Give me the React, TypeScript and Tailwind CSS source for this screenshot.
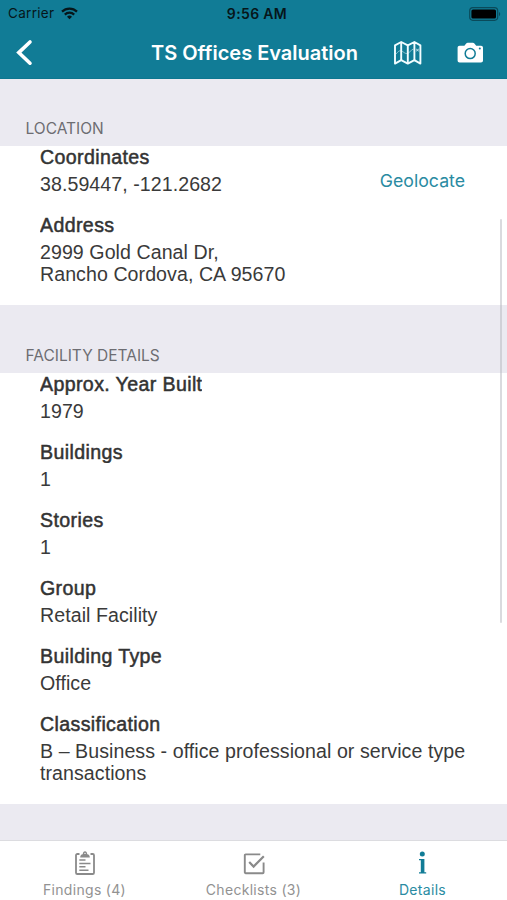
import type { ReactNode } from "react";

type Item = {
  label: string;
  lines: string[];
  action?: string;
};

const location: Item[] = [
  { label: "Coordinates", lines: ["38.59447, -121.2682"], action: "Geolocate" },
  { label: "Address", lines: ["2999 Gold Canal Dr,", "Rancho Cordova, CA 95670"] },
];

const facility: Item[] = [
  { label: "Approx. Year Built", lines: ["1979"] },
  { label: "Buildings", lines: ["1"] },
  { label: "Stories", lines: ["1"] },
  { label: "Group", lines: ["Retail Facility"] },
  { label: "Building Type", lines: ["Office"] },
  {
    label: "Classification",
    lines: ["B – Business - office professional or service type", "transactions"],
  },
];

function WifiIcon() {
  return (
    <svg width="17" height="13" viewBox="0 0 17 13" fill="none" stroke="#06161a" strokeWidth="2.2">
      <path d="M1 4.6a10.8 10.8 0 0 1 15 0" />
      <path d="M3.8 7.6a6.8 6.8 0 0 1 9.4 0" />
      <path d="M8.5 12.2 6 9.7a3.6 3.6 0 0 1 5 0Z" fill="#06161a" stroke="none" />
    </svg>
  );
}

function BatteryIcon() {
  return (
    <svg width="32" height="14" viewBox="0 0 32 14" fill="none">
      <rect x="0.7" y="0.7" width="28" height="12.6" rx="3.2" stroke="#0a4a5a" strokeWidth="1.2" />
      <rect x="2.4" y="2.4" width="24.6" height="9.2" rx="1.6" fill="#000" />
      <path d="M30 5v4.2c1.6-.6 1.6-3.6 0-4.2Z" fill="#0a4a5a" />
    </svg>
  );
}

function BackIcon() {
  return (
    <svg width="18" height="28" viewBox="0 0 18 28" fill="none" stroke="#fff" strokeWidth="3.6" strokeLinecap="round">
      <path d="M15 3 3.8 13.6 15 24.2" />
    </svg>
  );
}

function MapIcon() {
  return (
    <svg width="30" height="26" viewBox="0 0 30 26" fill="none" stroke="#f2fdff" strokeWidth="1.9" strokeLinejoin="round">
      <path d="M2 5.4 8.2 2l6.6 3.400L21.4 2l6 3.4V23.6l-6-3.4-6.6 3.4-6.6-3.4L2 23.6Z" />
      <path d="M8.2 2v18.2M14.8 5.4v18.2M21.4 2v18.2" />
      <path d="M3 14c2-2.4 3.4-3.6 5-3.2 2.6.6 4 3.6 6.8 2.6 2.6-1 3-4 5.6-4.2" strokeWidth="1" opacity=".5" />
      <path d="m23.2 9 2.6 2.2m0-2.2-2.6 2.2" strokeWidth="1" opacity=".8" />
    </svg>
  );
}

function CameraIcon() {
  return (
    <svg width="27" height="22" viewBox="0 0 27 22">
      <path
        d="M2.6 3.8h4.8l1.8-2.2c.4-.5.9-.8 1.5-.8h5.2c.6 0 1.1.3 1.5.8l1.8 2.2h4.8c1.2 0 2 .8 2 2v12.8c0 1.2-.8 2-2 2H2.6c-1.2 0-2-.8-2-2V5.8c0-1.2.8-2 2-2Z"
        fill="#fff"
      />
      <circle cx="13.2" cy="11.6" r="5" fill="none" stroke="#117c96" strokeWidth="1.5" />
      <circle cx="22.8" cy="6.4" r="1" fill="#117c96" />
    </svg>
  );
}

function ClipboardIcon() {
  return (
    <svg width="20" height="25" viewBox="0 0 20 25" fill="none" stroke="#8a8a8a" strokeWidth="1.8">
      <path d="M4.5 3H2.3A1.3 1.3 0 0 0 1 4.3v17.4A1.3 1.3 0 0 0 2.3 23h15.4a1.3 1.3 0 0 0 1.3-1.3V4.3A1.3 1.3 0 0 0 17.7 3H15.5" />
      <path d="M5.2 6.4c0-1.8.9-3 2.5-3.200C8 1.500 8.6.2 10 .2s2 1.300 2.300 3c1.600.2 2.500 1.400 2.500 3.200Z" fill="#8a8a8a" stroke="none" />
      <circle cx="10" cy="2.4" r=".7" fill="#fff" stroke="none" />
      <path d="M4.3 9h6.2M4.3 12.4h11.2M4.3 15.8h6.2M4.3 19.2h9.2" strokeWidth="1.5" />
    </svg>
  );
}

function CheckIcon() {
  return (
    <svg width="22" height="24" viewBox="0 0 22 24" fill="none" stroke="#8a8a8a" strokeWidth="1.9">
      <path d="M17.3 3.4H2.7a.9.9 0 0 0-.9.9v17a.9.9 0 0 0 .9.9h17a.9.9 0 0 0 .9-.9V11.6" />
      <path d="m6.2 11 4.4 4.600L20.8 5.2" strokeWidth="2.2" />
    </svg>
  );
}

function InfoIcon() {
  return (
    <svg width="9" height="24" viewBox="0 0 9 24" fill="#117c96">
      <circle cx="4.3" cy="3" r="2.5" />
      <path d="M1 8h5.4v13.2h1.800v1.2H1v-1.2h1.8V9.2H1Z" />
    </svg>
  );
}

function SectionTitle({ children }: { children: ReactNode }) {
  return (
    <h2 className="flex items-end h-[68px] pl-[25.5px] pb-[7px] text-[15.5px] leading-[20px] text-[#6d6d72]">
      {children}
    </h2>
  );
}

function Section({ items }: { items: Item[] }) {
  return (
    <dl className="bg-white pl-10 pr-[42px] text-[#3a3a3a] text-[19.6px] font-['Liberation_Sans',sans-serif]">
      {items.map((item) => (
        <div key={item.label} className="flex justify-between pb-[19px] last:pb-[19.5px]">
          <div>
            <dt className="h-[22px] leading-[22px] overflow-hidden whitespace-nowrap tracking-[0.37px] text-[#333] [-webkit-text-stroke:0.5px_#333]">
              {item.label}
            </dt>
            <dd className="pt-[4.5px] leading-[22.5px] tracking-[0.06px] whitespace-nowrap">
              {item.lines.map((line) => (
                <div key={line}>{line}</div>
              ))}
            </dd>
          </div>
          {item.action && (
            <button className="self-end h-[29px] leading-[22px] text-[17.7px] text-[#2a8ba2] font-[Inter,sans-serif]">
              {item.action}
            </button>
          )}
        </div>
      ))}
    </dl>
  );
}

function Tab({ icon, label, active }: { icon: ReactNode; label: string; active?: boolean }) {
  return (
    <button
      className={`flex-1 flex flex-col items-center pt-[10px] text-[14px] leading-[18px] tracking-[0.3px] ${
        active ? "text-[#2a8ba2]" : "text-[#929292]"
      }`}
    >
      <span className="h-[30px] flex items-start justify-center">{icon}</span>
      {label}
    </button>
  );
}

export default function App() {
  return (
    <div className="relative flex flex-col w-[507px] h-[900px] overflow-hidden bg-[#ebeaf1] font-[Inter,sans-serif]">
      <header className="h-[79px] shrink-0 bg-[#117c96] border-b border-[#0d7790]">
        <div className="grid grid-cols-3 items-center h-[27px] pl-2 pr-[6px] text-[13.5px] text-[#06161a]">
          <div className="flex items-center gap-[7px] tracking-[0.3px]">
            Carrier
            <WifiIcon />
          </div>
          <div className="text-center text-[14px] font-semibold tracking-[0.35px] pl-[5px]">9:56 AM</div>
          <div className="flex justify-end">
            <BatteryIcon />
          </div>
        </div>
        <div className="flex items-center h-[51px] pl-[15px] pr-[23px]">
          <BackIcon />
          <h1 className="flex-1 pl-[117px] text-center text-[20px] font-semibold text-white whitespace-nowrap">
            TS Offices Evaluation
          </h1>
          <div className="flex items-center gap-[34px] pl-[34px]">
            <MapIcon />
            <CameraIcon />
          </div>
        </div>
      </header>

      <main className="flex-1 min-h-0 overflow-hidden -mt-px">
        <SectionTitle>LOCATION</SectionTitle>
        <Section items={location} />
        <SectionTitle>FACILITY DETAILS</SectionTitle>
        <Section items={facility} />
      </main>

      {/* scroll indicator */}
      <div className="absolute left-[500px] top-[219px] w-[2px] h-[404px] rounded-full bg-[#b5b5bd]/50" />

      <nav className="flex h-[60px] shrink-0 bg-white border-t border-[#dcdce0]">
        <Tab icon={<ClipboardIcon />} label="Findings (4)" />
        <Tab icon={<CheckIcon />} label="Checklists (3)" />
        <Tab icon={<InfoIcon />} label="Details" active />
      </nav>
    </div>
  );
}
